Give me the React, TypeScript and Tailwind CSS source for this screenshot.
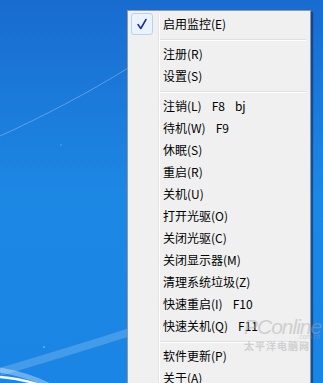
import type { ReactNode } from 'react'

type Entry =
  | { kind: 'item'; label: string; keys?: string[]; checked?: boolean }
  | { kind: 'sep' }

const ENTRIES: Entry[] = [
  { kind: 'item', label: '启用监控(E)', checked: true },
  { kind: 'sep' },
  { kind: 'item', label: '注册(R)' },
  { kind: 'item', label: '设置(S)' },
  { kind: 'sep' },
  { kind: 'item', label: '注销(L)', keys: ['F8', 'bj'] },
  { kind: 'item', label: '待机(W)', keys: ['F9'] },
  { kind: 'item', label: '休眠(S)' },
  { kind: 'item', label: '重启(R)' },
  { kind: 'item', label: '关机(U)' },
  { kind: 'item', label: '打开光驱(O)' },
  { kind: 'item', label: '关闭光驱(C)' },
  { kind: 'item', label: '关闭显示器(M)' },
  { kind: 'item', label: '清理系统垃圾(Z)' },
  { kind: 'item', label: '快速重启(I)', keys: ['F10'] },
  { kind: 'item', label: '快速关机(Q)', keys: ['F11'] },
  { kind: 'sep' },
  { kind: 'item', label: '软件更新(P)' },
  { kind: 'item', label: '关于(A)' },
]

function Gutter({ children }: { children?: ReactNode }) {
  return (
    <div className="flex w-[29px] shrink-0 items-center self-stretch border-r border-[#e2e3e3] pl-px">
      {children}
    </div>
  )
}

function CheckBox() {
  return (
    <div className="flex h-[22px] w-[22px] items-center justify-center rounded-[3px] border border-[#b9d2ea] bg-[#eaf2fb]">
      <svg width="14" height="14" viewBox="0 0 14 14">
        <path d="M3 7.5 L5.8 11.5 L11 2.5" fill="none" stroke="#1b2a9c" strokeWidth="1.5" strokeLinecap="round" strokeLinejoin="round" />
      </svg>
    </div>
  )
}

function Row({ entry }: { entry: Entry }) {
  if (entry.kind === 'sep') {
    return (
      <div className="flex h-[8px]">
        <Gutter />
        <div className="flex-1 border-l border-white pt-[4px] pr-[2px]">
          <div className="h-px bg-[#e0e0e0]" />
          <div className="h-px bg-white" />
        </div>
      </div>
    )
  }
  return (
    <div className="flex h-[22px] items-center">
      <Gutter>{entry.checked && <CheckBox />}</Gutter>
      <div className="flex h-full flex-1 items-center gap-[8px] border-l border-white pl-[3px] text-[12px] text-black">
        <span>{entry.label}</span>
        {entry.keys?.map((k) => (
          <span key={k} className="ml-[2px]">
            {k}
          </span>
        ))}
      </div>
    </div>
  )
}

export default function App() {
  return (
    <div
      className="relative h-[383px] w-[323px] overflow-hidden bg-gradient-to-b from-[#196ccf] via-[#1d87e4] to-[#1a85e4]"
      style={{ fontFamily: '"Noto Sans CJK SC", "Noto Sans", sans-serif' }}
    >
      {/* wallpaper streaks */}
      <svg className="absolute inset-0" width="323" height="383" viewBox="0 0 323 383">
        <path d="M0 136 C40 118 90 92 128 68" fill="none" stroke="rgba(255,255,255,0.28)" strokeWidth="1" />
        <path d="M0 372 C40 360 90 345 130 332" fill="none" stroke="rgba(255,255,255,0.18)" strokeWidth="8" />
        <path d="M0 377 C14 378 28 381 40 385" fill="none" stroke="rgba(255,255,255,0.95)" strokeWidth="2.5" />
        <path d="M0 370 C16 373 34 378 48 385" fill="none" stroke="rgba(255,255,255,0.35)" strokeWidth="5" />
        <circle cx="44" cy="347" r="0.8" fill="rgba(255,255,255,0.6)" />
        <circle cx="61" cy="145" r="0.7" fill="rgba(255,255,255,0.4)" />
      </svg>

      {/* context menu */}
      <div className="absolute left-[127px] top-[10px] w-[184px] border border-[#979797] bg-[#f0f0f0] p-[2px] shadow-[2px_2px_1px_rgba(0,20,80,0.45)]">
        {ENTRIES.map((e, i) => (
          <Row key={i} entry={e} />
        ))}
      </div>

      {/* watermark */}
      <div className="pointer-events-none absolute left-[244px] top-[316px] w-[76px] select-none text-[#a8a8a8] opacity-45">
        <div className="flex items-end gap-[1px]">
          <span
            className="text-[21px] italic leading-none tracking-[-1px]"
            style={{ fontFamily: '"Liberation Sans", sans-serif' }}
          >
            PConline
          </span>
        </div>
        <div className="-mt-[3px] text-right text-[6px] leading-none">.com.cn</div>
        <div className="mt-[1px] text-[10px] font-bold leading-none tracking-[1px]">太平洋电脑网</div>
      </div>
    </div>
  )
}
